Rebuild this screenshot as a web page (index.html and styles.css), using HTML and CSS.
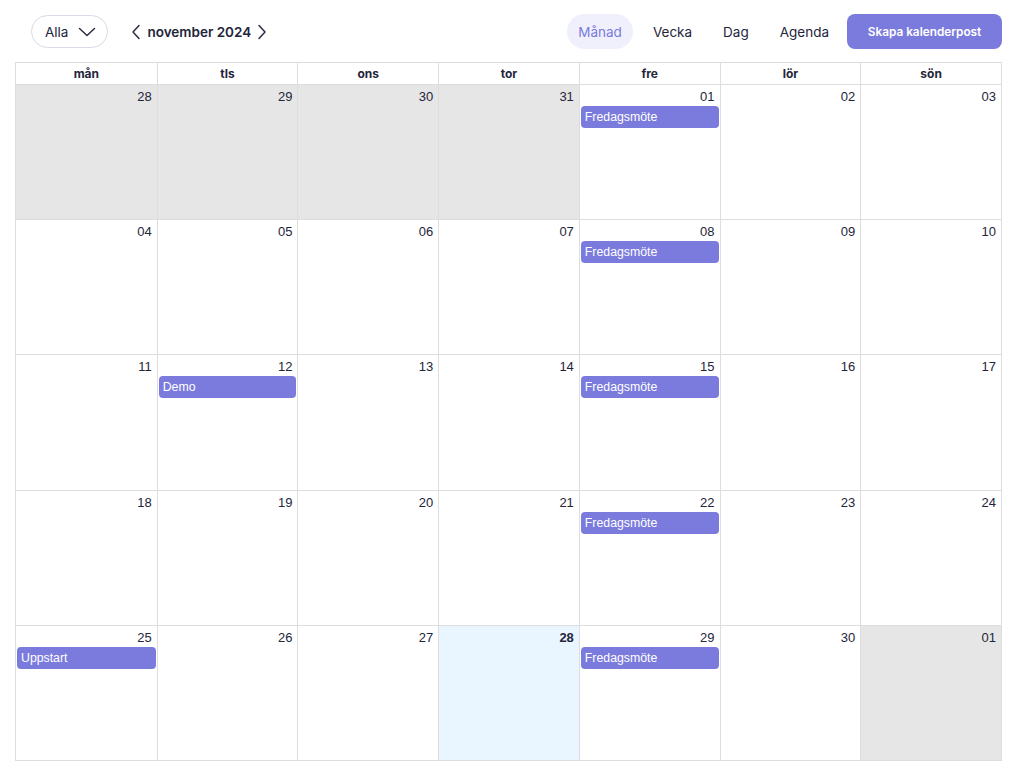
FILE: index.html
```html
<!DOCTYPE html>
<html lang="sv">
<head>
  <meta charset="UTF-8" />
  <meta name="viewport" content="width=device-width, initial-scale=1.0" />
  <title>Kalender</title>
  <link rel="stylesheet" href="styles.css">
</head>
<body>

<div class="page">
  <div class="toolbar">
    <div class="toolbar-left">
      <button class="filter-btn">Alla
        <svg width="18" height="10" viewBox="0 0 18 10"><path d="M1.5 1.5 L9 8.5 L16.5 1.5" fill="none" stroke="#2b2d42" stroke-width="1.5" stroke-linecap="round" stroke-linejoin="round"/></svg>
      </button>
      <div class="month-nav">
        <svg width="10" height="16" viewBox="0 0 10 16"><path d="M8 1.5 L2 8 L8 14.5" fill="none" stroke="#2b2d42" stroke-width="1.5" stroke-linecap="round" stroke-linejoin="round"/></svg>
        <span class="month-label">november 2024</span>
        <svg width="10" height="16" viewBox="0 0 10 16"><path d="M2 1.5 L8 8 L2 14.5" fill="none" stroke="#2b2d42" stroke-width="1.5" stroke-linecap="round" stroke-linejoin="round"/></svg>
      </div>
    </div>
    <div class="toolbar-right">
      <button class="view-btn active">Månad</button>
      <button class="view-btn">Vecka</button>
      <button class="view-btn">Dag</button>
      <button class="view-btn">Agenda</button>
      <button class="create-btn">Skapa kalenderpost</button>
    </div>
  </div>

  <div class="calendar">
    <div class="head">
      <div>mån</div><div>tls</div><div>ons</div><div>tor</div><div>fre</div><div>lör</div><div>sön</div>
    </div>

    <div class="week">
      <div class="day off"><span class="num">28</span></div>
      <div class="day off"><span class="num">29</span></div>
      <div class="day off"><span class="num">30</span></div>
      <div class="day off"><span class="num">31</span></div>
      <div class="day"><span class="num">01</span><div class="event">Fredagsmöte</div></div>
      <div class="day"><span class="num">02</span></div>
      <div class="day"><span class="num">03</span></div>
    </div>

    <div class="week">
      <div class="day"><span class="num">04</span></div>
      <div class="day"><span class="num">05</span></div>
      <div class="day"><span class="num">06</span></div>
      <div class="day"><span class="num">07</span></div>
      <div class="day"><span class="num">08</span><div class="event">Fredagsmöte</div></div>
      <div class="day"><span class="num">09</span></div>
      <div class="day"><span class="num">10</span></div>
    </div>

    <div class="week">
      <div class="day"><span class="num">11</span></div>
      <div class="day"><span class="num">12</span><div class="event">Demo</div></div>
      <div class="day"><span class="num">13</span></div>
      <div class="day"><span class="num">14</span></div>
      <div class="day"><span class="num">15</span><div class="event">Fredagsmöte</div></div>
      <div class="day"><span class="num">16</span></div>
      <div class="day"><span class="num">17</span></div>
    </div>

    <div class="week">
      <div class="day"><span class="num">18</span></div>
      <div class="day"><span class="num">19</span></div>
      <div class="day"><span class="num">20</span></div>
      <div class="day"><span class="num">21</span></div>
      <div class="day"><span class="num">22</span><div class="event">Fredagsmöte</div></div>
      <div class="day"><span class="num">23</span></div>
      <div class="day"><span class="num">24</span></div>
    </div>

    <div class="week">
      <div class="day"><span class="num">25</span><div class="event">Uppstart</div></div>
      <div class="day"><span class="num">26</span></div>
      <div class="day"><span class="num">27</span></div>
      <div class="day today"><span class="num">28</span></div>
      <div class="day"><span class="num">29</span><div class="event">Fredagsmöte</div></div>
      <div class="day"><span class="num">30</span></div>
      <div class="day off"><span class="num">01</span></div>
    </div>
  </div>
</div>

</body>
</html>
```

FILE: styles.css
```css
body {
  margin: 0;
  font-family: Inter, "Liberation Sans", sans-serif;
  color: #23253a;
  background: #fff;
}
.page { padding: 14px 14px 0 15px; }

.toolbar {
  display: flex; justify-content: space-between; align-items: center;
  height: 35px; margin-bottom: 13px;
}
.toolbar-left { display: flex; align-items: center; padding-left: 16px; }
.toolbar-right { display: flex; align-items: center; }
button { font-family: inherit; cursor: pointer; }

.filter-btn {
  display: flex; align-items: center; gap: 10px;
  height: 33px; padding: 0 11px 0 13px;
  border: 1px solid #d8dbe6; border-radius: 17px; background: #fff;
  font-size: 13.5px; color: #23253a;
}
.month-nav { display: flex; align-items: center; gap: 6px; margin-left: 23px; }
.month-label { font-size: 13.5px; font-weight: 600; }

.view-btn {
  height: 35px; padding: 0 11px; margin-left: 9px;
  border: none; border-radius: 18px; background: transparent;
  font-size: 13.5px; color: #23253a;
}
.view-btn.active { background: #f0f0fc; color: #7b7bdd; }
.create-btn {
  height: 35px; width: 155px; margin-left: 7px;
  border: none; border-radius: 8px; background: #7b7bdd;
  color: #fff; font-size: 11.8px; font-weight: 600;
}

.calendar {
  width: 985px; height: 697px;
  border: 1px solid #ddd;
  display: flex; flex-direction: column;
}
.head {
  display: grid; grid-template-columns: repeat(7, 1fr);
  height: 21px; border-bottom: 1px solid #ddd;
}
.head div {
  border-left: 1px solid #ddd; text-align: center;
  font-size: 12px; font-weight: 700; line-height: 21px;
}
.head div:first-child { border-left: none; }

.week {
  flex: 1;
  display: grid; grid-template-columns: repeat(7, 1fr);
  border-top: 1px solid #ddd;
}
.head + .week { border-top: none; }
.day {
  border-left: 1px solid #ddd;
  display: flex; flex-direction: column;
  font-family: "Liberation Sans", Arial, sans-serif;
}
.day:first-child { border-left: none; }
.day.off { background: #e6e6e6; }
.day.today { background: #eaf6ff; }
.num {
  text-align: right; font-size: 13px; padding: 4px 5px 0 0; height: 17px;
}
.today .num { font-weight: 700; }
.event {
  margin: 0 1px 0 1px;
  height: 22px; line-height: 22px;
  background: #7b7bdd; color: #fff; border-radius: 4px;
  font-size: 12.3px; padding: 0 4px;
}
```
